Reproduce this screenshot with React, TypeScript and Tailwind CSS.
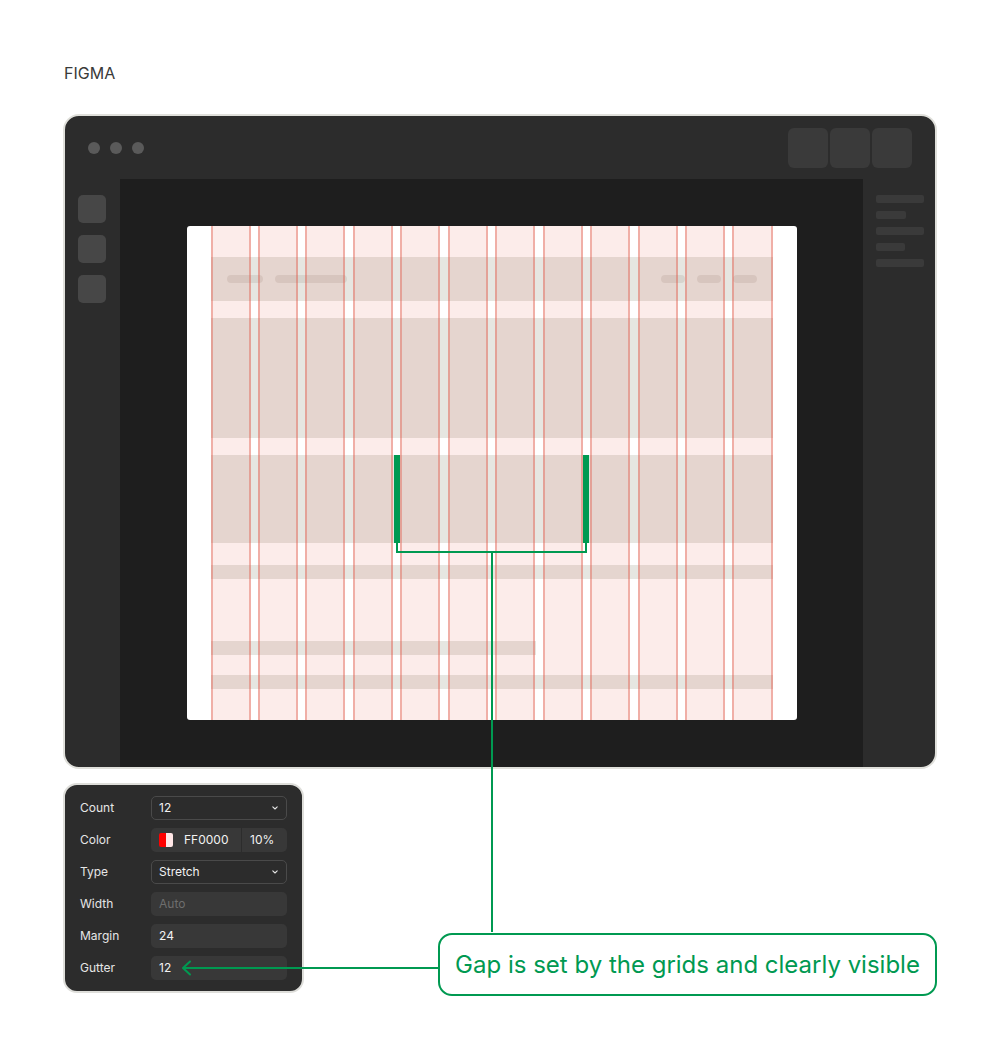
const GREEN = '#009951';

const Chevron = () => (
  <svg width="6" height="4" viewBox="0 0 6 4" className="shrink-0">
    <path d="M0.8 0.8 L3 3 L5.2 0.8" fill="none" stroke="#e6e6e6" strokeWidth="1.1" strokeLinecap="round" strokeLinejoin="round" />
  </svg>
);

const Field = ({ label, children }: { label: string; children: React.ReactNode }) => (
  <div className="flex h-6 items-center justify-between">
    <span className="text-[12px] text-[#e6e6e6]">{label}</span>
    {children}
  </div>
);

const Select = ({ value }: { value: string }) => (
  <div className="flex h-6 w-[136px] items-center justify-between rounded-[5px] border border-[#4a4a4a] pl-[7px] pr-[8px] text-[12px] text-[#f2f2f2]">
    <span>{value}</span>
    <Chevron />
  </div>
);

const Input = ({ value, muted }: { value: string; muted?: boolean }) => (
  <div
    className={`flex h-6 w-[136px] items-center rounded-[5px] bg-[#383838] pl-2 text-[12px] ${
      muted ? 'text-[#6e6e6e]' : 'text-[#f2f2f2]'
    }`}
  >
    {value}
  </div>
);

const GridPanel = () => (
  <div className="mb-[3px] flex w-[241px] flex-col gap-2 rounded-[14px] border-2 border-[#dededa] bg-[#2c2c2c] pb-[11px] pl-[15px] pr-[15px] pt-[11px]">
    <Field label="Count">
      <Select value="12" />
    </Field>
    <Field label="Color">
      <div className="flex h-6 w-[136px] items-center rounded-[5px] bg-[#383838] text-[12px] text-[#f2f2f2]">
        <div className="ml-2 flex h-[14px] w-[14px] overflow-hidden rounded-[2px]">
          <div className="w-1/2 bg-[#ff0000]" />
          <div className="w-1/2 bg-[#ffe6e6]" />
        </div>
        <span className="ml-[11px] w-[57px]">FF0000</span>
        <div className="h-6 w-px bg-[#2c2c2c]" />
        <span className="pl-2">10%</span>
      </div>
    </Field>
    <Field label="Type">
      <Select value="Stretch" />
    </Field>
    <Field label="Width">
      <Input value="Auto" muted />
    </Field>
    <Field label="Margin">
      <Input value="24" />
    </Field>
    <Field label="Gutter">
      <Input value="12" />
    </Field>
  </div>
);

const Bar = ({ className }: { className: string }) => <div className={`bg-[#e6e6e1] ${className}`} />;

const Frame = () => (
  <div className="relative h-[494px] w-[610px] rounded-[3px] bg-white">
    {/* page content under the grid */}
    <div className="flex flex-col px-6 pt-[31px]">
      <div className="flex h-[44px] items-center justify-between bg-[#e6e6e1] px-4">
        <div className="flex gap-3">
          <div className="h-2 w-9 rounded-full bg-[#d6d4ce]" />
          <div className="h-2 w-[72px] rounded-full bg-[#d6d4ce]" />
        </div>
        <div className="flex gap-3">
          <div className="h-2 w-6 rounded-full bg-[#d6d4ce]" />
          <div className="h-2 w-6 rounded-full bg-[#d6d4ce]" />
          <div className="h-2 w-6 rounded-full bg-[#d6d4ce]" />
        </div>
      </div>
      <Bar className="mt-[17px] h-[120px]" />
      <Bar className="mt-[17px] h-[88px]" />
      <Bar className="mt-[22px] h-[14px]" />
      <Bar className="mt-[62px] h-[14px] w-[325px]" />
      <Bar className="mt-[20px] h-[14px]" />
    </div>

    {/* layout grid overlay */}
    <div className="absolute inset-y-0 left-6 right-6 grid grid-cols-12 gap-x-[7.4px]">
      {Array.from({ length: 12 }).map((_, i) => (
        <div key={i} className="border-x-2 border-[rgba(225,90,75,0.42)] bg-[rgba(232,80,60,0.11)]" />
      ))}
    </div>
  </div>
);

const Window = () => (
  <div className="mt-[31px] flex h-[655px] w-[874px] flex-col overflow-hidden rounded-[16px] border-2 border-[#e0e0db] bg-[#2c2c2c]">
    <div className="flex h-[63px] shrink-0 items-center justify-between pl-[23px] pr-[23px]">
      <div className="flex gap-[10px]">
        <div className="h-3 w-3 rounded-full bg-[#5a5a5a]" />
        <div className="h-3 w-3 rounded-full bg-[#5a5a5a]" />
        <div className="h-3 w-3 rounded-full bg-[#5a5a5a]" />
      </div>
      <div className="flex gap-[2px]">
        <div className="h-10 w-10 rounded-[6px] bg-[#3a3a3a]" />
        <div className="h-10 w-10 rounded-[6px] bg-[#3a3a3a]" />
        <div className="h-10 w-10 rounded-[6px] bg-[#3a3a3a]" />
      </div>
    </div>
    <div className="flex flex-1">
      <div className="flex w-[55px] shrink-0 flex-col gap-3 pl-[13px] pt-4">
        <div className="h-7 w-7 rounded-[5px] bg-[#474747]" />
        <div className="h-7 w-7 rounded-[5px] bg-[#474747]" />
        <div className="h-7 w-7 rounded-[5px] bg-[#474747]" />
      </div>
      <div className="flex flex-1 items-center justify-center bg-[#1e1e1e]">
        <Frame />
      </div>
      <div className="flex w-[72px] shrink-0 flex-col gap-2 pl-[13px] pt-4">
        <div className="h-2 w-12 rounded-[2px] bg-[#3a3a3a]" />
        <div className="h-2 w-[30px] rounded-[2px] bg-[#3a3a3a]" />
        <div className="h-2 w-12 rounded-[2px] bg-[#3a3a3a]" />
        <div className="h-2 w-[29px] rounded-[2px] bg-[#3a3a3a]" />
        <div className="h-2 w-12 rounded-[2px] bg-[#3a3a3a]" />
      </div>
    </div>
  </div>
);

// green markers, bracket and connector lines drawn over everything
const Annotations = () => (
  <svg className="pointer-events-none absolute left-0 top-0" width="1000" height="1055" viewBox="0 0 1000 1055">
    <rect x="394" y="455" width="6" height="88" fill={GREEN} />
    <rect x="583" y="455" width="6" height="88" fill={GREEN} />
    <path d="M397 543 V552 H586 V543" fill="none" stroke={GREEN} strokeWidth="2" />
    <path d="M492 552 V932" fill="none" stroke={GREEN} strokeWidth="2" />
    <path d="M438 968 H183" fill="none" stroke={GREEN} strokeWidth="2" />
    <path d="M190 961.5 L183 968 L190 974.5" fill="none" stroke={GREEN} strokeWidth="2" strokeLinecap="round" strokeLinejoin="round" />
  </svg>
);

export default function App() {
  return (
    <div className="relative h-[1055px] w-[1000px] bg-white font-['Inter',sans-serif]">
      <div className="px-[63px] pt-[63px]">
        <div className="pl-px text-[16px] leading-[20px] text-[#3a3a3a]">FIGMA</div>
        <Window />
        <div className="mt-[14px] flex items-end justify-between">
          <GridPanel />
          <div className="flex h-[63px] w-[499px] items-center justify-center rounded-[14px] border-2 border-[#009951] bg-white text-[24px] text-[#009951]">
            Gap is set by the grids and clearly visible
          </div>
        </div>
      </div>
      <Annotations />
    </div>
  );
}
